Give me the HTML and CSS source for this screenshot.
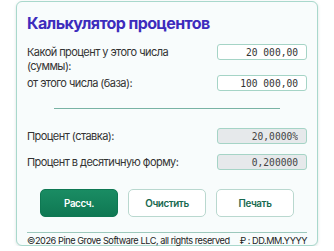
FILE: index.html
```html
<!DOCTYPE html>
<html lang="ru">
<head>
    <meta charset="UTF-8">
    <meta name="viewport" content="width=device-width, initial-scale=1.0">
    <title>Калькулятор процентов</title>
    <link rel="stylesheet" href="styles.css">
</head>
<body>
    <div id="kalkulyator">
        <h1 class="title">Калькулятор процентов</h1>

        <div class="row row-top">
            <label for="summa">Какой процент у этого числа<br>(суммы):</label>
            <input type="text" id="summa" value="20 000,00">
        </div>
        <div class="row row-base">
            <label for="baza">от этого числа (база):</label>
            <input type="text" id="baza" value="100 000,00">
        </div>

        <hr class="divider">

        <div class="row">
            <label for="stavka">Процент (ставка):</label>
            <input type="text" id="stavka" class="readonly" value="20,0000%" readonly>
        </div>
        <div class="row row-next">
            <label for="dolya">Процент в десятичную форму:</label>
            <input type="text" id="dolya" class="readonly" value="0,200000" readonly>
        </div>

        <div class="buttons">
            <button id="btn-calc" class="btn btn-primary">Рассч.</button>
            <button class="btn">Очистить</button>
            <button class="btn">Печать</button>
        </div>

        <div class="footer">
            <span>©2026 Pine Grove Software LLC, all rights reserved</span>
            <span>₽ : DD.MM.YYYY</span>
        </div>
    </div>
</body>
</html>
```

FILE: styles.css
```css
*{
    box-sizing: border-box;
    padding: 0;
    margin: 0;
}

body{
    background: #fff;
    font-family: Inter, "Noto Sans", sans-serif;
    color: #333;
}

#kalkulyator{
    width: 302px;
    margin-left: 16px;
    margin-top: 1px;
    height: 245px;
    background: #f8fcfc;
    border: 1px solid #a9d8cc;
    border-radius: 6px;
    box-shadow: 0 1px 3px rgba(90, 140, 130, 0.25);
    padding: 11px 10px 0 10px;
}

.title{
    font-size: 16px;
    font-weight: 700;
    letter-spacing: -0.6px;
    color: #3d2cbd;
    line-height: 20px;
    margin-bottom: 11px;
}

.row{
    display: flex;
    justify-content: space-between;
    align-items: center;
    height: 16px;
    margin-top: 19px;
}

.row-top{
    height: 29px;
    margin-top: 0;
    align-items: flex-start;
}

.row-base{
    margin-top: 2px;
}

.row-next{
    margin-top: 10px;
}

.row label{
    font-size: 11px;
    letter-spacing: -0.55px;
    line-height: 14px;
    color: #333;
}

.row-top label{
    padding-top: 1px;
}

.row input{
    width: 90px;
    height: 16px;
    border: 1px solid #a5d4c6;
    border-radius: 3px;
    background: #fff;
    font-family: "DejaVu Sans Mono", monospace;
    font-size: 9.6px;
    color: #333;
    text-align: right;
    padding: 0 8px;
}

.row input.readonly{
    background: #e6e9eb;
    color: #444;
}

.divider{
    border: none;
    border-top: 1px solid #79b3a4;
    width: 226px;
    margin: 17px auto 0 auto;
}

.buttons{
    display: flex;
    justify-content: center;
    gap: 10px;
    margin-top: 19px;
}

.btn{
    width: 78px;
    height: 28px;
    border: 1px solid #b9d8cf;
    border-radius: 5px;
    background: #fff;
    color: #17694f;
    font-family: Inter, "Noto Sans", sans-serif;
    font-size: 9.8px;
    letter-spacing: -0.4px;
    font-weight: 600;
}

.btn-primary{
    background: linear-gradient(#1a8c63, #0f7853);
    border-color: #0f7853;
    color: #fff;
}

.footer{
    margin-top: 15px;
    border-top: 1px solid #9cc8bc;
    display: flex;
    justify-content: space-between;
    font-size: 9.2px;
    letter-spacing: -0.45px;
    line-height: 11px;
    padding-top: 2px;
    color: #222;
    white-space: nowrap;
}
```
